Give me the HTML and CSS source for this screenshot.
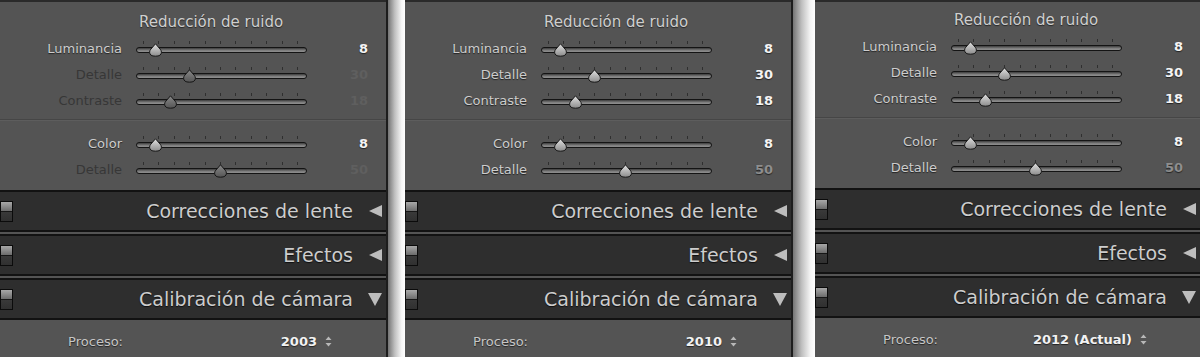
FILE: index.html
```html
<!DOCTYPE html>
<html lang="es">
<head>
    <meta charset="UTF-8">
    <title>Reducción de ruido - Proceso</title>
    <link rel="stylesheet" href="styles.css">
</head>
<body>
    <svg class="defs" width="0" height="0">
        <defs>
            <linearGradient id="thumbOn" x1="0" y1="0" x2="0" y2="1">
                <stop offset="0" stop-color="#e2e2e2"/>
                <stop offset="1" stop-color="#8c8c8c"/>
            </linearGradient>
            <linearGradient id="thumbOff" x1="0" y1="0" x2="0" y2="1">
                <stop offset="0" stop-color="#8a8a8a"/>
                <stop offset="1" stop-color="#555"/>
            </linearGradient>
            <path id="thumbShape" d="M6.5 0.8 L11.2 6.2 Q12.4 7.6 12.4 9.2 Q12.4 13.2 6.5 13.2 Q0.6 13.2 0.6 9.2 Q0.6 7.6 1.8 6.2 Z"/>
        </defs>
    </svg>

    <!-- Proceso 2003 -->
    <section class="panel">
        <div class="noise">
            <h2 class="noise-title">Reducción de ruido</h2>
            <div class="group">
                <div class="row">
                    <span class="row-label">Luminancia</span>
                    <div class="slider"><span class="ticks"></span><span class="track"></span>
                        <svg class="thumb" style="--v: 8" viewBox="0 0 13 14"><use href="#thumbShape" fill="url(#thumbOn)"/></svg></div>
                    <span class="row-value">8</span>
                </div>
                <div class="row is-off">
                    <span class="row-label">Detalle</span>
                    <div class="slider"><span class="ticks"></span><span class="track"></span>
                        <svg class="thumb" style="--v: 30" viewBox="0 0 13 14"><use href="#thumbShape" fill="url(#thumbOff)"/></svg></div>
                    <span class="row-value">30</span>
                </div>
                <div class="row is-off">
                    <span class="row-label">Contraste</span>
                    <div class="slider"><span class="ticks"></span><span class="track"></span>
                        <svg class="thumb" style="--v: 18" viewBox="0 0 13 14"><use href="#thumbShape" fill="url(#thumbOff)"/></svg></div>
                    <span class="row-value">18</span>
                </div>
            </div>
            <div class="group group-color">
                <div class="row">
                    <span class="row-label">Color</span>
                    <div class="slider"><span class="ticks"></span><span class="track"></span>
                        <svg class="thumb" style="--v: 8" viewBox="0 0 13 14"><use href="#thumbShape" fill="url(#thumbOn)"/></svg></div>
                    <span class="row-value">8</span>
                </div>
                <div class="row is-off">
                    <span class="row-label">Detalle</span>
                    <div class="slider"><span class="ticks"></span><span class="track"></span>
                        <svg class="thumb" style="--v: 50" viewBox="0 0 13 14"><use href="#thumbShape" fill="url(#thumbOff)"/></svg></div>
                    <span class="row-value">50</span>
                </div>
            </div>
        </div>
        <div class="section-head"><span class="switch"></span><span class="head-title">Correcciones de lente</span><span class="arrow arrow-left"></span></div>
        <div class="section-head"><span class="switch"></span><span class="head-title">Efectos</span><span class="arrow arrow-left"></span></div>
        <div class="section-head"><span class="switch"></span><span class="head-title">Calibración de cámara</span><span class="arrow arrow-down"></span></div>
        <div class="process">
            <span class="process-label">Proceso:</span>
            <span class="process-value">2003</span>
            <svg class="spinner" viewBox="0 0 7 11"><path d="M3.5 0.5 L6.5 4 L0.5 4 Z M3.5 10.5 L6.5 7 L0.5 7 Z"/></svg>
        </div>
    </section>

    <div class="shade"></div>

    <!-- Proceso 2010 -->
    <section class="panel">
        <div class="noise">
            <h2 class="noise-title">Reducción de ruido</h2>
            <div class="group">
                <div class="row">
                    <span class="row-label">Luminancia</span>
                    <div class="slider"><span class="ticks"></span><span class="track"></span>
                        <svg class="thumb" style="--v: 8" viewBox="0 0 13 14"><use href="#thumbShape" fill="url(#thumbOn)"/></svg></div>
                    <span class="row-value">8</span>
                </div>
                <div class="row">
                    <span class="row-label">Detalle</span>
                    <div class="slider"><span class="ticks"></span><span class="track"></span>
                        <svg class="thumb" style="--v: 30" viewBox="0 0 13 14"><use href="#thumbShape" fill="url(#thumbOn)"/></svg></div>
                    <span class="row-value">30</span>
                </div>
                <div class="row">
                    <span class="row-label">Contraste</span>
                    <div class="slider"><span class="ticks"></span><span class="track"></span>
                        <svg class="thumb" style="--v: 18" viewBox="0 0 13 14"><use href="#thumbShape" fill="url(#thumbOn)"/></svg></div>
                    <span class="row-value">18</span>
                </div>
            </div>
            <div class="group group-color">
                <div class="row">
                    <span class="row-label">Color</span>
                    <div class="slider"><span class="ticks"></span><span class="track"></span>
                        <svg class="thumb" style="--v: 8" viewBox="0 0 13 14"><use href="#thumbShape" fill="url(#thumbOn)"/></svg></div>
                    <span class="row-value">8</span>
                </div>
                <div class="row is-dim">
                    <span class="row-label">Detalle</span>
                    <div class="slider"><span class="ticks"></span><span class="track"></span>
                        <svg class="thumb" style="--v: 50" viewBox="0 0 13 14"><use href="#thumbShape" fill="url(#thumbOn)"/></svg></div>
                    <span class="row-value">50</span>
                </div>
            </div>
        </div>
        <div class="section-head"><span class="switch"></span><span class="head-title">Correcciones de lente</span><span class="arrow arrow-left"></span></div>
        <div class="section-head"><span class="switch"></span><span class="head-title">Efectos</span><span class="arrow arrow-left"></span></div>
        <div class="section-head"><span class="switch"></span><span class="head-title">Calibración de cámara</span><span class="arrow arrow-down"></span></div>
        <div class="process">
            <span class="process-label">Proceso:</span>
            <span class="process-value">2010</span>
            <svg class="spinner" viewBox="0 0 7 11"><path d="M3.5 0.5 L6.5 4 L0.5 4 Z M3.5 10.5 L6.5 7 L0.5 7 Z"/></svg>
        </div>
    </section>

    <div class="shade shade-wide"></div>

    <!-- Proceso 2012 -->
    <section class="panel panel-last">
        <div class="noise">
            <h2 class="noise-title">Reducción de ruido</h2>
            <div class="group">
                <div class="row">
                    <span class="row-label">Luminancia</span>
                    <div class="slider"><span class="ticks"></span><span class="track"></span>
                        <svg class="thumb" style="--v: 8" viewBox="0 0 13 14"><use href="#thumbShape" fill="url(#thumbOn)"/></svg></div>
                    <span class="row-value">8</span>
                </div>
                <div class="row">
                    <span class="row-label">Detalle</span>
                    <div class="slider"><span class="ticks"></span><span class="track"></span>
                        <svg class="thumb" style="--v: 30" viewBox="0 0 13 14"><use href="#thumbShape" fill="url(#thumbOn)"/></svg></div>
                    <span class="row-value">30</span>
                </div>
                <div class="row">
                    <span class="row-label">Contraste</span>
                    <div class="slider"><span class="ticks"></span><span class="track"></span>
                        <svg class="thumb" style="--v: 18" viewBox="0 0 13 14"><use href="#thumbShape" fill="url(#thumbOn)"/></svg></div>
                    <span class="row-value">18</span>
                </div>
            </div>
            <div class="group group-color">
                <div class="row">
                    <span class="row-label">Color</span>
                    <div class="slider"><span class="ticks"></span><span class="track"></span>
                        <svg class="thumb" style="--v: 8" viewBox="0 0 13 14"><use href="#thumbShape" fill="url(#thumbOn)"/></svg></div>
                    <span class="row-value">8</span>
                </div>
                <div class="row is-dim">
                    <span class="row-label">Detalle</span>
                    <div class="slider"><span class="ticks"></span><span class="track"></span>
                        <svg class="thumb" style="--v: 50" viewBox="0 0 13 14"><use href="#thumbShape" fill="url(#thumbOn)"/></svg></div>
                    <span class="row-value">50</span>
                </div>
            </div>
        </div>
        <div class="section-head"><span class="switch"></span><span class="head-title">Correcciones de lente</span><span class="arrow arrow-left"></span></div>
        <div class="section-head"><span class="switch"></span><span class="head-title">Efectos</span><span class="arrow arrow-left"></span></div>
        <div class="section-head"><span class="switch"></span><span class="head-title">Calibración de cámara</span><span class="arrow arrow-down"></span></div>
        <div class="process">
            <span class="process-label">Proceso:</span>
            <span class="process-value">2012 (Actual)</span>
            <svg class="spinner" viewBox="0 0 7 11"><path d="M3.5 0.5 L6.5 4 L0.5 4 Z M3.5 10.5 L6.5 7 L0.5 7 Z"/></svg>
        </div>
    </section>
</body>
</html>
```

FILE: styles.css
```css
* {
    box-sizing: border-box;
    margin: 0;
    padding: 0;
}

body {
    font-family: 'DejaVu Sans', 'Liberation Sans', sans-serif;
    background: #fff;
    display: flex;
    height: 357px;
    overflow: hidden;
}

.defs {
    display: block;
    width: 0;
    height: 0;
}

.panel {
    width: 388px;
    height: 357px;
    flex-shrink: 0;
    display: flex;
    flex-direction: column;
    background-color: #545454;
    border-right: 2px solid #1d1d1d;
    overflow: hidden;
}

.panel-last {
    width: 385px;
    border-right: none;
}

.panel-last .noise-title {
    margin-top: 8px;
}

.panel-last .process {
    padding-top: 4px;
}

.shade {
    width: 17px;
    flex-shrink: 0;
    background: linear-gradient(to right, #747474, #c0c0c0 40%, #f6f6f6 80%, #fff);
}

.shade-wide {
    width: 22px;
}

/* reducción de ruido */

.noise {
    border-top: 2px solid #2a2a2a;
}

.noise-title {
    margin-top: 10px;
    margin-left: 137px;
    width: 148px;
    text-align: center;
    white-space: nowrap;
    font-size: 15px;
    font-weight: normal;
    line-height: 20px;
    color: #cfcfcf;
    text-shadow: 0 1px 1px rgba(0, 0, 0, 0.55);
}

.group {
    padding: 4px 0 5px;
    border-bottom: 1px solid #464646;
}

.group-color {
    padding: 10px 0 7px;
    border-top: 1px solid #5d5d5d;
    border-bottom: none;
}

.row {
    display: grid;
    grid-template-columns: 122px 171px 47px;
    column-gap: 14px;
    height: 26px;
    align-items: center;
}

.row-label {
    text-align: right;
    font-size: 13px;
    line-height: 26px;
    color: #cdcdcd;
    white-space: nowrap;
    text-shadow: 0 1px 1px rgba(0, 0, 0, 0.6);
}

.row-value {
    text-align: right;
    font-size: 13px;
    font-weight: bold;
    line-height: 26px;
    color: #f4f4f4;
    text-shadow: 0 1px 1px rgba(0, 0, 0, 0.6);
}

.is-off .row-label {
    color: #373737;
    text-shadow: none;
}

.is-off .row-value {
    color: #5f5f5f;
    text-shadow: none;
}

.is-dim .row-value {
    color: #8e8e8e;
}

.slider {
    position: relative;
    height: 26px;
}

.ticks {
    display: block;
    margin: 5px 0 0 7px;
    width: 156px;
    height: 3px;
    background: repeating-linear-gradient(to right, #2f2f2f 0, #2f2f2f 1px, transparent 1px, transparent 15.4px);
}

.track {
    display: block;
    margin-top: 3px;
    height: 6px;
    border: 1px solid #141414;
    border-radius: 3px;
    background: linear-gradient(to bottom, #3c3c3c, #7e7e7e 60%, #8f8f8f);
}

.thumb {
    position: absolute;
    top: 7px;
    left: calc(0.5px + var(--v) * 1.55px);
    width: 13px;
    height: 14px;
    stroke: #151515;
    stroke-width: 1;
    overflow: visible;
}

/* collapsed sections */

.section-head {
    display: flex;
    align-items: center;
    height: 42px;
    background-color: #2e2e2e;
    border-top: 2px solid #121212;
    border-bottom: 2px solid #121212;
    margin-bottom: 2px;
    padding-right: 4px;
}

.switch {
    width: 13px;
    height: 21px;
    border: 1px solid #0b0b0b;
    background: linear-gradient(to bottom, #a8a8a8 0, #6e6e6e 46%, #161616 46%, #161616 54%, #393939 54%, #303030 100%);
}

.head-title {
    flex: 1;
    text-align: right;
    font-size: 19px;
    line-height: 38px;
    color: #cdcdcd;
    white-space: nowrap;
    text-shadow: 0 1px 1px rgba(0, 0, 0, 0.7);
}

.arrow {
    width: 14px;
    height: 14px;
    margin-left: 15px;
}

.arrow-left::before,
.arrow-down::before {
    content: "";
    display: block;
    width: 0;
    height: 0;
}

.arrow-left::before {
    margin: 1px 0 0 1px;
    border-top: 6px solid transparent;
    border-bottom: 6px solid transparent;
    border-right: 13px solid #bdbdbd;
}

.arrow-down::before {
    margin: 1px 0 0 0;
    border-left: 7px solid transparent;
    border-right: 7px solid transparent;
    border-top: 13px solid #bdbdbd;
}

/* proceso */

.process {
    flex: 1;
    display: grid;
    grid-template-columns: 123px 194px 16px;
    align-items: center;
    padding-top: 6px;
    margin-top: -2px;
    background-color: #545454;
}

.process-label {
    text-align: right;
    font-size: 13px;
    color: #c6c6c6;
    text-shadow: 0 1px 1px rgba(0, 0, 0, 0.6);
}

.process-value {
    text-align: right;
    font-size: 13px;
    font-weight: bold;
    color: #f2f2f2;
    white-space: nowrap;
    text-shadow: 0 1px 1px rgba(0, 0, 0, 0.6);
}

.spinner {
    width: 7px;
    height: 11px;
    margin-left: 8px;
    fill: #b8b8b8;
}
```
